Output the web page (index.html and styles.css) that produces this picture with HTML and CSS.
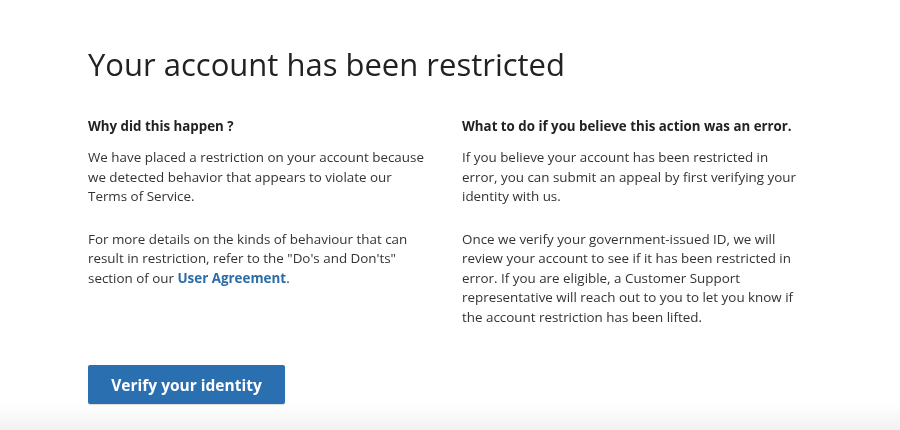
FILE: index.html
```html
<!doctype html>
<html lang="en">
<head>
<meta charset="utf-8">
<title>Your account has been restricted</title>
<link rel="stylesheet" href="styles.css">
</head>
<body>

<div class="page">
  <h1 class="title">Your account has been restricted</h1>

  <div class="columns">
    <div class="column">
      <h2>Why did this happen ?</h2>
      <p>We have placed a restriction on your account because we detected behavior that appears to violate our Terms of Service.</p>
      <p>For more details on the kinds of behaviour that can result in restriction, refer to the "Do's and Don'ts" section of our <a href="#">User Agreement</a>.</p>
    </div>
    <div class="column">
      <h2>What to do if you believe this action was an error.</h2>
      <p>If you believe your account has been restricted in error, you can submit an appeal by first verifying your identity with us.</p>
      <p>Once we verify your government-issued ID, we will review your account to see if it has been restricted in error. If you are eligible, a Customer Support representative will reach out to you to let you know if the account restriction has been lifted.</p>
    </div>
  </div>

  <button class="verify">Verify your identity</button>
</div>

<div class="footer-fade"></div>

</body>
</html>
```

FILE: styles.css
```css
html, body {
  margin: 0;
  height: 100%;
}
body {
  font-family: "Open Sans", "Noto Sans", sans-serif;
  color: #333;
  background: #fff;
  overflow: hidden;
}
.page {
  padding: 40px 0 0 88px;
  width: 724px;
}
.title {
  font-size: 31px;
  font-weight: 400;
  color: #222;
  margin: 0;
  line-height: 48px;
}
.columns {
  display: grid;
  grid-template-columns: 340px 340px;
  column-gap: 34px;
  margin-top: 28px;
}
.column h2 {
  font-size: 13.3px;
  font-weight: 700;
  color: #222;
  margin: 0 0 12px;
  line-height: 20px;
  white-space: nowrap;
}
.column p {
  font-size: 13.4px;
  line-height: 19.5px;
  margin: 0 0 23px;
}
.column a {
  color: #2a6ca8;
  font-weight: 700;
  text-decoration: none;
}
.verify {
  margin-top: 15px;
  width: 197px;
  height: 39px;
  background: #2a6fb0;
  color: #fff;
  border: none;
  border-radius: 2px;
  font-family: inherit;
  font-size: 15.5px;
  font-weight: 700;
  box-shadow: 0 1px 1px rgba(0, 0, 0, 0.15);
}
.footer-fade {
  position: fixed;
  left: 0;
  right: 0;
  bottom: 0;
  height: 26px;
  background: linear-gradient(#fff, #f2f2f2);
  z-index: -1;
}
```
